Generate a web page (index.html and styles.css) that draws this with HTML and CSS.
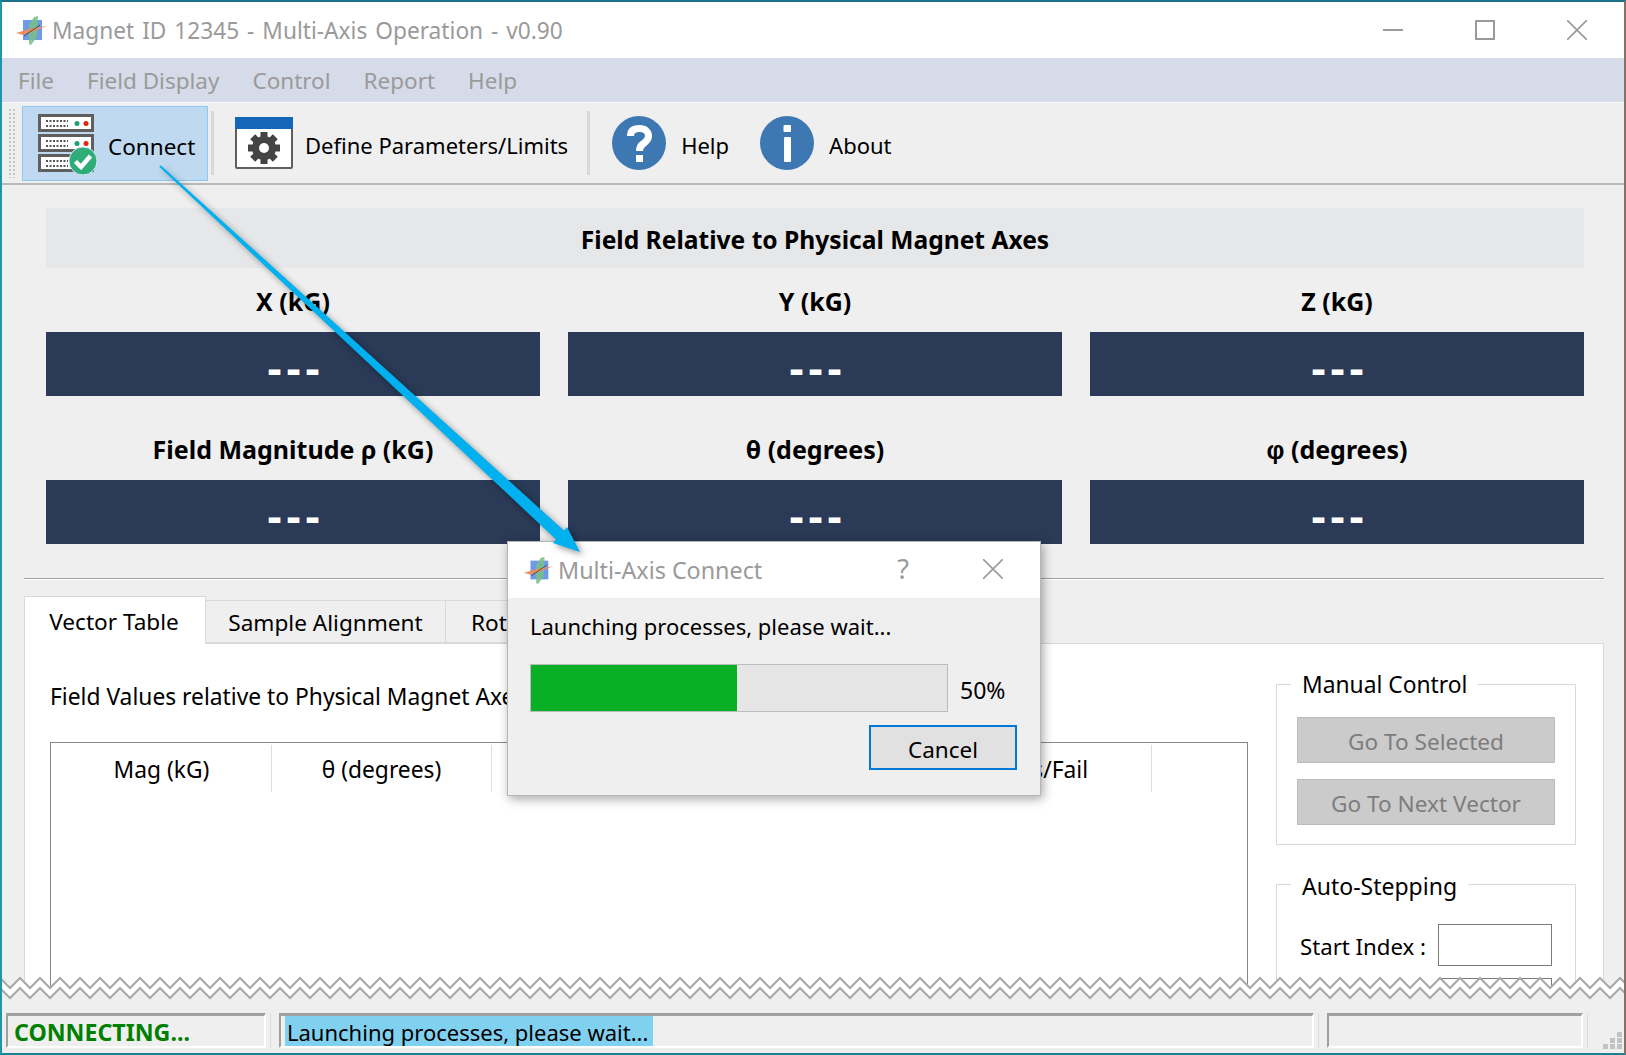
FILE: index.html
```html
<!DOCTYPE html>
<html lang="en">
<head>
    <meta charset="UTF-8">
    <title>Magnet ID 12345 - Multi-Axis Operation - v0.90</title>
    <link rel="stylesheet" href="styles.css">
</head>
<body>
    <svg class="defs" width="0" height="0">
        <defs>
            <symbol id="appLogo" viewBox="0 0 32 32">
                <rect x="8" y="6" width="19" height="20" fill="#6f9ae8"/>
                <polygon points="14,11 19,3 23,2 22,23 16,31 14,30" fill="#79bf85" opacity="0.85"/>
                <polygon points="1,19 14,15 32,12 22,16 8,21" fill="#ec8c5c" opacity="0.95"/>
                <line x1="9" y1="22" x2="25" y2="11" stroke="#333" stroke-width="0.8"/>
            </symbol>
            <symbol id="serverRow" viewBox="0 0 56 18">
                <rect x="1.5" y="1.5" width="53" height="15" fill="#fff" stroke="#5f5f5f" stroke-width="3"/>
                <line x1="8" y1="7" x2="30" y2="7" stroke="#555" stroke-width="2" stroke-dasharray="2 1.5"/>
                <line x1="8" y1="12" x2="30" y2="12" stroke="#555" stroke-width="2" stroke-dasharray="2 1.5"/>
                <circle cx="39" cy="9.5" r="2.5" fill="#1aa36f"/>
                <circle cx="48" cy="9.5" r="2.5" fill="#e0260f"/>
            </symbol>
        </defs>
    </svg>

    <div class="window">
        <div class="titlebar">
            <svg class="app-logo"><use href="#appLogo"/></svg>
            <span class="title-text">Magnet ID 12345 - Multi-Axis Operation - v0.90</span>
            <div class="win-buttons">
                <svg width="20" height="20"><line x1="0" y1="10" x2="20" y2="10" stroke="#9a9a9a" stroke-width="2"/></svg>
                <svg width="20" height="20"><rect x="1" y="1" width="18" height="18" fill="none" stroke="#9a9a9a" stroke-width="2"/></svg>
                <svg width="20" height="20"><path d="M0 0L20 20M20 0L0 20" stroke="#9a9a9a" stroke-width="1.6"/></svg>
            </div>
        </div>

        <div class="menubar">
            <span>File</span>
            <span>Field Display</span>
            <span>Control</span>
            <span>Report</span>
            <span>Help</span>
        </div>

        <div class="toolbar">
            <div class="grip"></div>
            <div class="tool tool-active">
                <div class="server-icon">
                    <svg width="56" height="18"><use href="#serverRow"/></svg>
                    <svg width="56" height="18"><use href="#serverRow"/></svg>
                    <svg width="56" height="18"><use href="#serverRow"/></svg>
                    <svg class="check-badge" width="30" height="30" viewBox="0 0 30 30">
                        <circle cx="15" cy="15" r="14" fill="#2fad78" stroke="#d5e8f5" stroke-width="1"/>
                        <path d="M7.5 15.5L13 21L22.5 10" fill="none" stroke="#fff" stroke-width="4.5"/>
                    </svg>
                </div>
                <span class="tool-label-connect">Connect</span>
            </div>
            <div class="tool-sep"></div>
            <div class="tool tool-define">
                <svg width="58" height="52" viewBox="0 0 58 52">
                    <rect x="1" y="1" width="56" height="50" rx="1" fill="#fff" stroke="#5f5f5f" stroke-width="2"/>
                    <rect x="0" y="0" width="58" height="12" fill="#1565b8"/>
                    <g fill="#444" transform="translate(29 31)">
                        <rect x="-3.5" y="-16" width="7" height="32"/>
                        <rect x="-3.5" y="-16" width="7" height="32" transform="rotate(45)"/>
                        <rect x="-3.5" y="-16" width="7" height="32" transform="rotate(90)"/>
                        <rect x="-3.5" y="-16" width="7" height="32" transform="rotate(135)"/>
                        <circle r="12"/>
                        <circle r="5" fill="#fff"/>
                    </g>
                </svg>
                <span>Define Parameters/Limits</span>
            </div>
            <div class="tool-sep"></div>
            <div class="tool tool-help">
                <svg width="54" height="54" viewBox="0 0 54 54">
                    <circle cx="27" cy="27" r="27" fill="#3d78b3"/>
                    <path d="M18.5 20C18.5 14.5 22 12.5 27.5 12.5C33 12.5 36.5 15.5 36.5 20C36.5 24 34 25.5 31.5 27.5C28.5 29.5 27.5 31 27.5 35" fill="none" stroke="#fff" stroke-width="7"/>
                    <rect x="24" y="39" width="7" height="7" fill="#fff"/>
                </svg>
                <span>Help</span>
            </div>
            <div class="tool tool-about">
                <svg width="54" height="54" viewBox="0 0 54 54">
                    <circle cx="27" cy="27" r="27" fill="#3d78b3"/>
                    <rect x="23.5" y="9" width="7.5" height="7" rx="1" fill="#fff"/>
                    <rect x="24" y="21" width="7" height="25" rx="1" fill="#fff"/>
                </svg>
                <span>About</span>
            </div>
        </div>

        <div class="main">
            <div class="readouts">
                <div class="band-title">Field Relative to Physical Magnet Axes</div>
                <div class="readout-grid">
                    <div class="readout">
                        <div class="readout-label">X (kG)</div>
                        <div class="readout-value">---</div>
                    </div>
                    <div class="readout">
                        <div class="readout-label">Y (kG)</div>
                        <div class="readout-value">---</div>
                    </div>
                    <div class="readout">
                        <div class="readout-label">Z (kG)</div>
                        <div class="readout-value">---</div>
                    </div>
                    <div class="readout">
                        <div class="readout-label">Field Magnitude ρ (kG)</div>
                        <div class="readout-value">---</div>
                    </div>
                    <div class="readout">
                        <div class="readout-label">θ (degrees)</div>
                        <div class="readout-value">---</div>
                    </div>
                    <div class="readout">
                        <div class="readout-label"><span class="greek">φ</span> (degrees)</div>
                        <div class="readout-value">---</div>
                    </div>
                </div>
            </div>

            <div class="divider"></div>

            <div class="tabs">
                <div class="tab tab-active">Vector Table</div>
                <div class="tab">Sample Alignment</div>
                <div class="tab tab-last">Rotation</div>
            </div>

            <div class="pane">
                <div class="pane-left">
                    <div class="pane-heading">Field Values relative to Physical Magnet Axes</div>
                    <div class="vector-table">
                        <div class="vt-head">
                            <div class="vt-cell">Mag (kG)</div>
                            <div class="vt-cell">θ (degrees)</div>
                            <div class="vt-cell"></div>
                            <div class="vt-cell"></div>
                            <div class="vt-cell">Pass/Fail</div>
                        </div>
                    </div>
                </div>
                <div class="pane-right">
                    <fieldset class="group">
                        <legend>Manual Control</legend>
                        <button class="btn-disabled" type="button">Go To Selected</button>
                        <button class="btn-disabled" type="button">Go To Next Vector</button>
                    </fieldset>
                    <fieldset class="group group-auto">
                        <legend>Auto-Stepping</legend>
                        <div class="field-grid">
                            <label for="startIndex">Start Index :</label>
                            <input type="text" id="startIndex">
                            <span></span>
                            <input type="text" aria-label="Stop index">
                        </div>
                    </fieldset>
                </div>
            </div>
        </div>

        <div class="statusbar">
            <div class="status-box status-state">CONNECTING...</div>
            <div class="status-sep"></div>
            <div class="status-box status-msg"><span>Launching processes, please wait...</span></div>
            <div class="status-sep"></div>
            <div class="status-box status-extra"></div>
            <div class="status-sep"></div>
            <svg class="size-grip" width="20" height="17">
                <rect x="15" y="0" width="5" height="5"/>
                <rect x="8" y="6" width="5" height="5"/>
                <rect x="15" y="6" width="5" height="5"/>
                <rect x="1" y="12" width="5" height="5"/>
                <rect x="8" y="12" width="5" height="5"/>
                <rect x="15" y="12" width="5" height="5"/>
            </svg>
        </div>

        <!-- torn edge across the bottom of the window -->
        <svg class="tear" width="1626" height="26">
            <defs>
                <pattern id="tearTile" patternUnits="userSpaceOnUse" width="20" height="26">
                    <polygon points="0,3 10,13 20,3 20,13 10,23 0,13" fill="#fff"/>
                    <polygon points="0,13 10,23 20,13 20,26 0,26" fill="#efefef"/>
                    <polyline points="-10,13 0,3 10,13 20,3 30,13" fill="none" stroke="#a9a9a9" stroke-width="2"/>
                    <polyline points="-10,23 0,13 10,23 20,13 30,23" fill="none" stroke="#a9a9a9" stroke-width="2"/>
                </pattern>
            </defs>
            <rect width="1626" height="26" fill="url(#tearTile)"/>
        </svg>

        <div class="dialog">
            <div class="dialog-title">
                <svg class="dialog-logo"><use href="#appLogo"/></svg>
                <span class="dialog-name">Multi-Axis Connect</span>
                <span class="dialog-help">?</span>
                <svg class="dialog-close" width="20" height="20"><path d="M0 0L20 20M20 0L0 20" stroke="#9a9a9a" stroke-width="1.6"/></svg>
            </div>
            <div class="dialog-body">
                <div class="dialog-msg">Launching processes, please wait...</div>
                <div class="progress-row">
                    <div class="progress"><div class="progress-fill" style="width: 49.5%"></div></div>
                    <span class="progress-pct">50%</span>
                </div>
                <div class="dialog-actions">
                    <button class="btn-cancel" type="button">Cancel</button>
                </div>
            </div>
        </div>

        <svg class="arrow" width="1626" height="1055">
            <polygon points="160.7,165.3 564,530.6 567,527 580,552 553,543 556,539.4 159.3,166.7" fill="#00b0ef"/>
        </svg>
    </div>
</body>
</html>
```

FILE: styles.css
```css
* {
    box-sizing: border-box;
}
html, body {
    margin: 0;
    padding: 0;
}
body {
    font-family: 'Noto Sans', 'Open Sans', sans-serif;
    font-size: 22px;
    color: #000;
    background-color: #efefef;
}
.defs {
    display: block;
    height: 0;
}
.window {
    position: relative;
    display: flex;
    flex-direction: column;
    width: 1626px;
    height: 1055px;
    overflow: hidden;
    background-color: #efefef;
    border-style: solid;
    border-width: 2px 2px 2px 2px;
    border-color: #1c7186 #8a6f63 #1e8096 #2395aa;
}

/* title bar */
.titlebar {
    display: flex;
    align-items: center;
    height: 56px;
    padding-left: 13px;
    background-color: #fff;
    flex-shrink: 0;
}
.app-logo {
    width: 32px;
    height: 32px;
    margin-right: 5px;
}
.title-text {
    font-size: 22.7px;
    color: #9a9a9a;
    word-spacing: 2px;
}
.win-buttons {
    display: flex;
    gap: 72px;
    margin-left: auto;
    margin-right: 37px;
}

/* menu */
.menubar {
    display: flex;
    gap: 33px;
    align-items: center;
    height: 45px;
    padding: 1px 0 0 16px;
    font-size: 22.5px;
    background-color: #d5dbe8;
    border-bottom: 1px solid #f7f7f7;
    color: #9a9a9a;
    flex-shrink: 0;
}

/* toolbar */
.toolbar {
    display: flex;
    align-items: center;
    height: 82px;
    border-bottom: 2px solid #b9b9b9;
    flex-shrink: 0;
}
.grip {
    width: 8px;
    height: 70px;
    margin-left: 6px;
    background-image: radial-gradient(#c6c6c6 40%, transparent 50%);
    background-size: 4px 4px;
}
.tool {
    display: flex;
    align-items: center;
}
.tool span {
    padding-top: 3px;
}
.tool .tool-label-connect {
    padding-top: 7px;
    font-size: 22.5px;
}
.tool-active {
    width: 186px;
    height: 75px;
    margin-left: 6px;
    padding-left: 15px;
    gap: 14px;
    background-color: #bfdaf0;
    border: 1px solid #8ec8f5;
}
.server-icon {
    position: relative;
    display: flex;
    flex-direction: column;
    gap: 2px;
}
.server-icon svg {
    display: block;
}
.check-badge {
    position: absolute;
    left: 30px;
    top: 32px;
}
.tool-sep {
    width: 3px;
    height: 64px;
    margin-left: 3px;
    background-color: #d8d8d8;
}
.tool-define {
    margin-left: 21px;
    gap: 12px;
}
.tool-define + .tool-sep {
    margin-left: 19px;
}
.tool-help {
    margin-left: 22px;
    gap: 15px;
}
.tool-about {
    margin-left: 31px;
    gap: 15px;
}

/* readouts */
.main {
    flex: 1;
    min-height: 0;
    overflow: hidden;
    padding: 0 20px 0 22px;
}
.readouts {
    padding: 23px 20px 0 22px;
}
.band-title {
    height: 60px;
    line-height: 60px;
    padding-top: 2px;
    text-align: center;
    font-weight: bold;
    font-size: 24.6px;
    background-color: #e6e7e8;
}
.readout-grid {
    display: grid;
    grid-template-columns: repeat(3, 494px);
    column-gap: 28px;
    row-gap: 36px;
    padding-top: 16px;
}
.readout-label {
    height: 36px;
    line-height: 34px;
    margin-bottom: 12px;
    text-align: center;
    font-weight: bold;
    font-size: 25px;
}
.greek {
    font-family: 'Liberation Sans', sans-serif;
}
.readout-value {
    height: 64px;
    padding: 13px 0 0 6px;
    line-height: 44px;
    text-align: center;
    font-size: 44px;
    font-weight: bold;
    letter-spacing: 5px;
    color: #fff;
    background-color: #2a3a57;
}

.divider {
    height: 2px;
    margin-top: 34px;
    background-color: #a0a0a0;
    border-bottom: 1px solid #fff;
}

/* tabs */
.tabs {
    display: flex;
    align-items: flex-end;
    margin-top: 16px;
    height: 47px;
    font-size: 22.6px;
}
.tab {
    display: flex;
    align-items: center;
    justify-content: center;
    width: 240px;
    height: 43px;
    padding-top: 2px;
    background-color: #efefef;
    border: 1px solid #d9d9d9;
    border-left: none;
}
.tab-active {
    width: 182px;
    height: 48px;
    margin-bottom: -1px;
    padding: 1px 2px 0 0;
    background-color: #fff;
    border-left: 1px solid #d9d9d9;
    border-bottom: none;
    position: relative;
    z-index: 1;
}
.tab-last {
    width: 200px;
    justify-content: flex-start;
    padding-left: 25px;
}

/* pane */
.pane {
    display: flex;
    height: 420px;
    padding: 25px 27px 0 25px;
    gap: 28px;
    font-size: 22.8px;
    background-color: #fff;
    border: 1px solid #d9d9d9;
}
.pane-left {
    width: 1198px;
}
.pane-heading {
    height: 36px;
    line-height: 36px;
    margin-top: 10px;
}
.vector-table {
    height: 300px;
    margin-top: 27px;
    border: 1px solid #86898c;
}
.vt-head {
    display: grid;
    grid-template-columns: repeat(5, 220px);
    padding: 2px 0 0 1px;
}
.vt-cell {
    height: 47px;
    line-height: 49px;
    text-align: center;
    border-right: 1px solid #dedede;
}
.pane-right {
    width: 300px;
}

/* group boxes */
.group {
    margin: 0;
    padding: 18px 20px 19px;
    min-width: 0;
    border: 1px solid #d9d9d9;
}
.group legend {
    margin-left: -6px;
    padding: 2px 11px 0;
    line-height: 28px;
}
.group-auto {
    margin-top: 24px;
    padding-top: 25px;
}
.group-auto legend {
    padding-top: 4px;
    line-height: 26px;
    font-size: 23px;
}
.btn-disabled {
    display: block;
    width: 258px;
    height: 46px;
    padding: 2px 0 0;
    font-family: inherit;
    font-size: 22.6px;
    color: #7d7d7d;
    background-color: #cbcbcb;
    border: 1px solid #bababa;
}
.btn-disabled + .btn-disabled {
    margin-top: 16px;
}
.field-grid {
    display: grid;
    grid-template-columns: 138px 114px;
    row-gap: 12px;
    align-items: center;
    padding-left: 3px;
    font-size: 22.2px;
}
.field-grid label {
    padding-top: 2px;
}
.field-grid input {
    height: 42px;
    width: 114px;
    border: 1px solid #7a7a7a;
    background-color: #fff;
}

/* status bar */
.statusbar {
    display: flex;
    height: 52px;
    padding: 12px 28px 5px 4px;
    flex-shrink: 0;
    position: relative;
}
.status-box {
    height: 35px;
    line-height: 32px;
    border-style: solid;
    border-width: 3px 2px 2px 2px;
    border-color: #a0a0a0 #fff #fff #a0a0a0;
}
.status-state {
    width: 260px;
    padding-left: 6px;
    font-size: 23.2px;
    font-weight: bold;
    color: #008000;
}
.status-msg {
    flex: 1;
    padding-left: 4px;
}
.status-msg span {
    display: inline-block;
    height: 30px;
    padding: 0 5px 0 2px;
    background-color: #80d0f0;
}
.status-extra {
    width: 256px;
}
.status-sep {
    width: 1px;
    margin: 0 8px 0 4px;
    background-color: #dcdcdc;
}
.size-grip {
    position: absolute;
    right: 2px;
    bottom: 4px;
    fill: #c2c2c2;
}

/* overlays */
.tear {
    position: absolute;
    left: -2px;
    top: 973px;
}
.arrow {
    position: absolute;
    left: -2px;
    top: -2px;
    pointer-events: none;
    filter: drop-shadow(3px 3px 3px rgba(0, 0, 0, 0.4));
}

/* dialog */
.dialog {
    position: absolute;
    left: 505px;
    top: 539px;
    width: 534px;
    height: 255px;
    background-color: #efefef;
    border: 1px solid #b5b5b5;
    box-shadow: 2px 3px 10px rgba(0, 0, 0, 0.35);
}
.dialog-title {
    display: flex;
    align-items: center;
    height: 56px;
    padding-left: 15px;
    background-color: #fff;
}
.dialog-logo {
    width: 30px;
    height: 30px;
    margin-right: 5px;
}
.dialog-name {
    font-size: 23.3px;
    line-height: 30px;
    color: #9a9a9a;
}
.dialog-help {
    margin-left: auto;
    font-size: 27px;
    line-height: 30px;
    margin-top: -2px;
    color: #9a9a9a;
}
.dialog-close {
    margin: -2px 37px 0 74px;
}
.dialog-body {
    padding: 10px 23px 0 22px;
}
.dialog-msg {
    height: 36px;
    line-height: 36px;
}
.progress-row {
    display: flex;
    align-items: center;
    margin-top: 20px;
}
.progress {
    width: 418px;
    height: 48px;
    background-color: #e6e6e6;
    border: 1px solid #bcbcbc;
}
.progress-fill {
    height: 100%;
    background-color: #08b026;
}
.progress-pct {
    margin-left: 12px;
    padding-top: 3px;
    font-size: 23px;
}
.dialog-actions {
    display: flex;
    justify-content: flex-end;
    margin-top: 13px;
}
.btn-cancel {
    width: 148px;
    height: 45px;
    padding: 3px 0 0;
    font-family: inherit;
    font-size: 22.5px;
    background-color: #e1e1e1;
    border: 2px solid #0078d7;
}
```
